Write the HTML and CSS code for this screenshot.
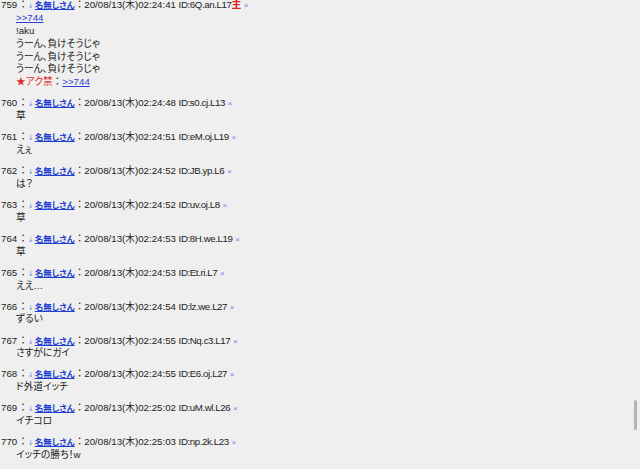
FILE: index.html
```html
<!DOCTYPE html>
<html lang="ja">
<head>
    <meta charset="UTF-8">
    <title>スレッド</title>
    <link rel="stylesheet" href="styles.css">
</head>
<body>
    <dl class="thread">
        <dt>759<span class="sep">：</span><a class="arrow">↓</a><a class="name">名無しさん</a><span class="sep">：</span>20/08/13(木)02:24:41 <span class="id">ID:6Q.an.L17</span><span class="owner">主</span> <span class="del">×</span></dt>
        <dd>
            <a class="anchor">&gt;&gt;744</a><br>
            !aku<br>
            うーん、負けそうじゃ<br>
            うーん、負けそうじゃ<br>
            うーん、負けそうじゃ<br>
            <span class="ban">★アク禁</span><span class="sep">：</span><a class="anchor">&gt;&gt;744</a>
        </dd>

        <dt>760<span class="sep">：</span><a class="arrow">↓</a><a class="name">名無しさん</a><span class="sep">：</span>20/08/13(木)02:24:48 <span class="id">ID:s0.cj.L13</span> <span class="del">×</span></dt>
        <dd>草</dd>

        <dt>761<span class="sep">：</span><a class="arrow">↓</a><a class="name">名無しさん</a><span class="sep">：</span>20/08/13(木)02:24:51 <span class="id">ID:eM.oj.L19</span> <span class="del">×</span></dt>
        <dd>えぇ</dd>

        <dt>762<span class="sep">：</span><a class="arrow">↓</a><a class="name">名無しさん</a><span class="sep">：</span>20/08/13(木)02:24:52 <span class="id">ID:JB.yp.L6</span> <span class="del">×</span></dt>
        <dd>は？</dd>

        <dt>763<span class="sep">：</span><a class="arrow">↓</a><a class="name">名無しさん</a><span class="sep">：</span>20/08/13(木)02:24:52 <span class="id">ID:uv.oj.L8</span> <span class="del">×</span></dt>
        <dd>草</dd>

        <dt>764<span class="sep">：</span><a class="arrow">↓</a><a class="name">名無しさん</a><span class="sep">：</span>20/08/13(木)02:24:53 <span class="id">ID:8H.we.L19</span> <span class="del">×</span></dt>
        <dd>草</dd>

        <dt>765<span class="sep">：</span><a class="arrow">↓</a><a class="name">名無しさん</a><span class="sep">：</span>20/08/13(木)02:24:53 <span class="id">ID:Et.ri.L7</span> <span class="del">×</span></dt>
        <dd>ええ…</dd>

        <dt>766<span class="sep">：</span><a class="arrow">↓</a><a class="name">名無しさん</a><span class="sep">：</span>20/08/13(木)02:24:54 <span class="id">ID:lz.we.L27</span> <span class="del">×</span></dt>
        <dd>ずるい</dd>

        <dt>767<span class="sep">：</span><a class="arrow">↓</a><a class="name">名無しさん</a><span class="sep">：</span>20/08/13(木)02:24:55 <span class="id">ID:Nq.c3.L17</span> <span class="del">×</span></dt>
        <dd>さすがにガイ</dd>

        <dt>768<span class="sep">：</span><a class="arrow">↓</a><a class="name">名無しさん</a><span class="sep">：</span>20/08/13(木)02:24:55 <span class="id">ID:E6.oj.L27</span> <span class="del">×</span></dt>
        <dd>ド外道イッチ</dd>

        <dt>769<span class="sep">：</span><a class="arrow">↓</a><a class="name">名無しさん</a><span class="sep">：</span>20/08/13(木)02:25:02 <span class="id">ID:uM.wl.L26</span> <span class="del">×</span></dt>
        <dd>イチコロ</dd>

        <dt>770<span class="sep">：</span><a class="arrow">↓</a><a class="name">名無しさん</a><span class="sep">：</span>20/08/13(木)02:25:03 <span class="id">ID:np.2k.L23</span> <span class="del">×</span></dt>
        <dd>イッチの勝ち！w</dd>
    </dl>

    <div class="scroll-thumb"></div>
</body>
</html>
```

FILE: styles.css
```css
* {
    box-sizing: border-box;
    margin: 0;
    padding: 0;
}

body {
    background-color: #efefef;
    color: #222;
    font-family: "Liberation Sans", "Noto Sans CJK JP", sans-serif;
    font-feature-settings: "palt";
    font-size: 9.7px;
    line-height: 12.8px;
    overflow: hidden;
}

.thread {
    margin-top: -0.6px;
    padding-left: 1px;
}

.thread dt {
    white-space: nowrap;
}

.thread dd {
    margin-bottom: 8.3px;
    padding-left: 15px;
}

.sep {
    font-feature-settings: normal;
}

.thread dt > .sep:first-child {
    margin-left: 1px;
}

.arrow {
    color: #6f8fe0;
    font-family: "DejaVu Sans", sans-serif;
    font-size: 7px;
    line-height: 1;
    margin-right: 1px;
}

.name {
    color: #2240d0;
    font-size: 8.5px;
    font-weight: bold;
    text-decoration: underline;
}

.id {
    letter-spacing: -0.4px;
}

.owner {
    color: #e02020;
    font-weight: bold;
}

.del {
    color: #7a7ae0;
    font-size: 8px;
    line-height: 1;
}

.anchor {
    color: #2a3fd6;
    text-decoration: underline;
}

.ban {
    color: #e02a2a;
}

.scroll-thumb {
    background-color: #b4b4b4;
    border-radius: 2px;
    height: 30px;
    position: absolute;
    right: 3px;
    top: 400px;
    width: 3px;
}
```
